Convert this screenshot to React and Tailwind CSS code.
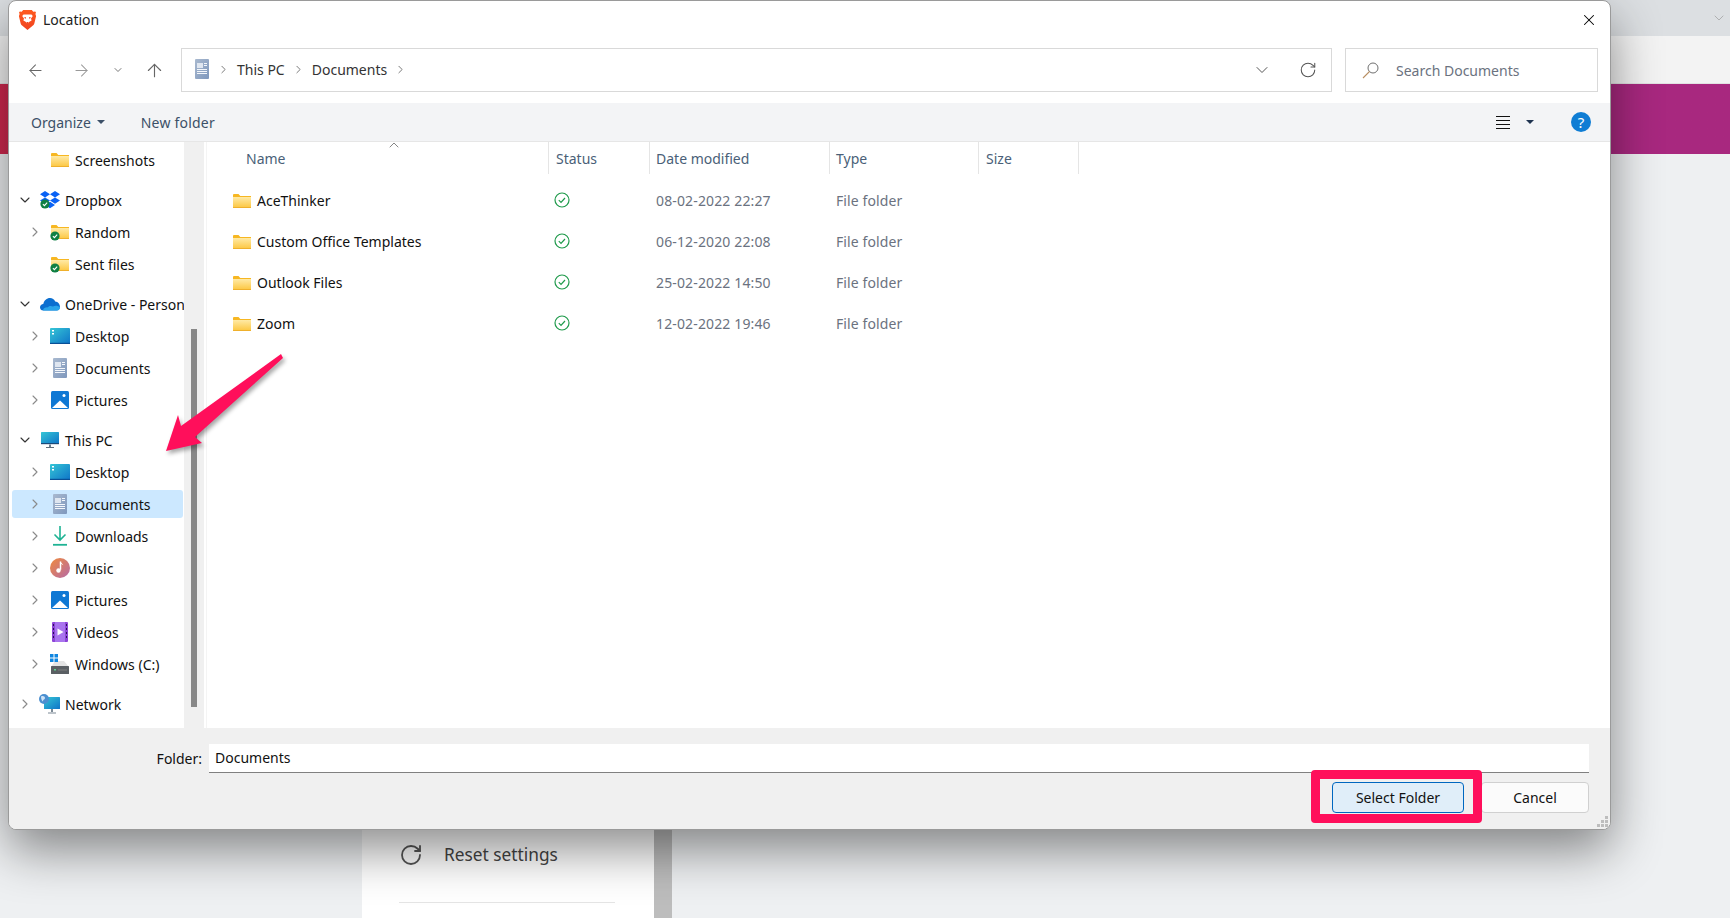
import React from "react";
import {
  ArrowLeft,
  ArrowRight,
  ArrowUp,
  ChevronDown,
  ChevronRight,
  ChevronUp,
  RotateCw,
  X,
} from "lucide-react";

// shared gradients for the little explorer icons
const Defs = () => (
  <svg className="absolute w-0 h-0">
    <defs>
      <linearGradient id="folderBody" x1="0" y1="0" x2="0" y2="1">
        <stop offset="0" stopColor="#ffeaa6" />
        <stop offset="1" stopColor="#fcc63f" />
      </linearGradient>
      <linearGradient id="docBody" x1="0" y1="0" x2="1" y2="1">
        <stop offset="0" stopColor="#a9b9cf" />
        <stop offset="1" stopColor="#7f98bd" />
      </linearGradient>
      <linearGradient id="screenBody" x1="0" y1="0" x2="1" y2="1">
        <stop offset="0" stopColor="#35c6d6" />
        <stop offset="1" stopColor="#0f74c8" />
      </linearGradient>
      <linearGradient id="musicBody" x1="0" y1="0" x2="1" y2="1">
        <stop offset="0" stopColor="#f08a3c" />
        <stop offset="1" stopColor="#b56aa8" />
      </linearGradient>
      <linearGradient id="braveBody" x1="0" y1="0" x2="0" y2="1">
        <stop offset="0" stopColor="#ff5a1f" />
        <stop offset="1" stopColor="#f0431f" />
      </linearGradient>
    </defs>
  </svg>
);

const Folder = () => (
  <svg width="18" height="14" viewBox="0 0 18 14">
    <path d="M0 1.2C0 .5.5 0 1.2 0h4.3l1.8 2H18v2H0z" fill="#f7b722" />
    <path d="M0 3h18v11H0z" fill="url(#folderBody)" />
    <path d="M0 13h18v1H0z" fill="#efb02c" />
  </svg>
);

const Badge = ({ className }) => (
  <svg className={className} width="10" height="10" viewBox="0 0 10 10">
    <circle cx="5" cy="5" r="4.6" fill="#0f8044" />
    <path d="M2.9 5.1l1.5 1.5 2.8-3" fill="none" stroke="#fff" strokeWidth="1.1" />
  </svg>
);

const SyncFolder = () => (
  <span className="relative flex">
    <Folder />
    <Badge className="absolute -left-[1px] top-[6px]" />
  </span>
);

const Dropbox = () => (
  <span className="relative flex">
    <svg width="20" height="18" viewBox="0 0 20 18">
      <path
        d="M5 0l5 3.2L5 6.4 0 3.2zM15 0l5 3.2-5 3.2-5-3.2zM5 6.4l5 3.2-5 3.2-5-3.2zM15 6.4l5 3.2-5 3.2-5-3.2zM5 14l5-3.2 5 3.2-5 3.2z"
        fill="#0a62f5"
      />
    </svg>
    <Badge className="absolute left-0 top-[8px]" />
  </span>
);

const OneDrive = () => (
  <svg width="20" height="14" viewBox="0 0 20 14">
    <path d="M3.5 13.5C.8 13.5 0 11.5 0 10.2 0 8.300 1.600 7 3.300 7 4 3.500 6.800 1 10 1c2.400 0 4.300 1.400 5.200 3.400C18 4.500 20 7 20 9.800c0 2.300-1.500 3.700-3.400 3.700z" fill="#0b6fd0" />
    <path d="M3 13.500h14c2 0 3-1.500 3-3.200-2-1.700-5-2-7-.8-2-1-4-.6-5.200.9C6.300 10 3 11 3 13.500z" fill="#2aa5ea" />
  </svg>
);

const Doc = () => (
  <svg width="14" height="20" viewBox="0 0 14 20">
    <rect width="14" height="20" rx="1" fill="url(#docBody)" />
    <path d="M2 4h6v5H2z" fill="#dfe6f0" />
    <path d="M9 4.500h3M9 6.500h3M2 10.500h10M2 12.500h10M2 14.500h10" stroke="#f4f7fb" strokeWidth="1" />
  </svg>
);

const Desktop = () => (
  <svg width="20" height="16" viewBox="0 0 20 16">
    <rect width="20" height="16" rx="1" fill="url(#screenBody)" />
    <path d="M2 2h2v1.500H2zM2 5h2v1.500H2z" fill="#fff" />
    <path d="M0 14.800h20V16H0z" fill="#0a4f96" />
  </svg>
);

const Pictures = () => (
  <svg width="18" height="18" viewBox="0 0 18 18">
    <rect width="18" height="18" rx="1.5" fill="#0f78d4" />
    <circle cx="13" cy="4.500" r="1.500" fill="#fff" />
    <path d="M1 17L9 9.500 17 17z" fill="#fff" />
  </svg>
);

const Downloads = () => (
  <svg width="14" height="20" viewBox="0 0 14 20">
    <path d="M7 0v14M1.500 8.500L7 14l5.500-5.500" fill="none" stroke="#1fb394" strokeWidth="1.600" />
    <path d="M0 18.800h14" stroke="#1fb394" strokeWidth="1.800" />
  </svg>
);

const Music = () => (
  <svg width="20" height="20" viewBox="0 0 20 20">
    <circle cx="10" cy="10" r="10" fill="url(#musicBody)" />
    <path d="M10.500 3.500v8.300" stroke="#fff" strokeWidth="1.500" />
    <path d="M10.500 3.500c.5 1.800 2.500 2 2.800 3.800-1-.9-2-1-2.800-1.200z" fill="#fff" />
    <circle cx="8.500" cy="12.500" r="2.200" fill="#fff" />
  </svg>
);

const Videos = () => (
  <svg width="16" height="20" viewBox="0 0 16 20">
    <rect width="16" height="20" rx="1" fill="#8d45d8" />
    <path d="M3 0h10v20H3z" fill="#a974ee" />
    <path d="M5.500 6.500l6 3.500-6 3.500z" fill="#fff" />
    <path d="M1 2h1v2H1zM1 6h1v2H1zM1 10h1v2H1zM1 14h1v2H1zM14 2h1v2h-1zM14 6h1v2h-1zM14 10h1v2h-1zM14 14h1v2h-1z" fill="#2c1159" />
  </svg>
);

const Drive = () => (
  <span className="relative flex w-[18px] h-[20px] items-end">
    <svg className="absolute -left-[1px] top-0" width="8" height="8" viewBox="0 0 8 8">
      <path d="M0 0h3.500v3.500H0zM4.500 0H8v3.500H4.500zM0 4.500h3.500V8H0zM4.500 4.500H8V8H4.500z" fill="#0f86e0" />
    </svg>
    <svg width="18" height="15" viewBox="0 0 18 15">
      <path d="M4 2h9l5 6H0z" fill="#e4e4e4" />
      <rect y="7" width="18" height="8" rx=".5" fill="#5a5f63" />
      <rect x="3" y="10" width="2" height="1.500" fill="#5fd38d" />
      <path d="M7 11h9" stroke="#888" strokeWidth=".8" />
    </svg>
  </span>
);

const ThisPc = () => (
  <svg width="18" height="16" viewBox="0 0 18 16">
    <rect width="18" height="12" rx=".5" fill="url(#screenBody)" />
    <path d="M0 11h18v1.200H0z" fill="#1b4a7a" />
    <path d="M8 12.500h2V15H8z" fill="#6e7f8f" />
    <path d="M5 15h8v1H5z" fill="#5f6c78" />
  </svg>
);

const Network = () => (
  <span className="relative flex w-[20px] h-[20px] items-end justify-end">
    <svg width="16" height="17" viewBox="0 0 16 17">
      <rect width="16" height="12" rx=".5" fill="url(#screenBody)" />
      <path d="M7 12h2v3H7zM4 15.500h8v1H4z" fill="#7c8a96" />
    </svg>
    <svg className="absolute -left-[1px] top-0" width="10" height="10" viewBox="0 0 10 10">
      <circle cx="5" cy="5" r="5" fill="#4b8fd0" />
      <path d="M2 2.500c2-1 4 0 4 1.500S4 5.500 4 7 2 6 2 2.500z" fill="#cfe3f5" />
    </svg>
  </span>
);

const BraveLogo = () => (
  <svg width="17" height="20" viewBox="0 0 17 20">
    <path
      d="M4.200 0h8.600l1.500 1.800 1.900-.4.800 1-.6 1.600.7 2-1.700 7.300c-.3 1.100-.8 1.800-1.800 2.500L8.500 20l-5.100-4.200c-1-.7-1.500-1.400-1.800-2.500L-.1 6l.7-2L0 2.400l.8-1 1.900.4z"
      fill="url(#braveBody)"
    />
    <path d="M4.500 4.500h8l1.300 1.500-1.800 2.500.6 2-2.600 1.400L8.500 14l-1.500-2.100L4.400 10.500l.6-2L3.200 6z" fill="#fff" />
    <path d="M7 7l-2 .6 1.500 1.400zM10 7l2 .6L10.500 9zM7.500 12h2L8.500 15z" fill="#f0431f" />
  </svg>
);

const sideGroups = [
  [{ label: "Screenshots", icon: <Folder />, level: 2, chevron: "none" }],
  [
    { label: "Dropbox", icon: <Dropbox />, level: 1, chevron: "open" },
    { label: "Random", icon: <SyncFolder />, level: 2, chevron: "closed" },
    { label: "Sent files", icon: <SyncFolder />, level: 2, chevron: "none" },
  ],
  [
    { label: "OneDrive - Person", icon: <OneDrive />, level: 1, chevron: "open" },
    { label: "Desktop", icon: <Desktop />, level: 2, chevron: "closed" },
    { label: "Documents", icon: <Doc />, level: 2, chevron: "closed" },
    { label: "Pictures", icon: <Pictures />, level: 2, chevron: "closed" },
  ],
  [
    { label: "This PC", icon: <ThisPc />, level: 1, chevron: "open" },
    { label: "Desktop", icon: <Desktop />, level: 2, chevron: "closed" },
    { label: "Documents", icon: <Doc />, level: 2, chevron: "closed", selected: true },
    { label: "Downloads", icon: <Downloads />, level: 2, chevron: "closed" },
    { label: "Music", icon: <Music />, level: 2, chevron: "closed" },
    { label: "Pictures", icon: <Pictures />, level: 2, chevron: "closed" },
    { label: "Videos", icon: <Videos />, level: 2, chevron: "closed" },
    { label: "Windows (C:)", icon: <Drive />, level: 2, chevron: "closed" },
  ],
  [{ label: "Network", icon: <Network />, level: 1, chevron: "closed" }],
];

const files = [
  { name: "AceThinker", date: "08-02-2022 22:27" },
  { name: "Custom Office Templates", date: "06-12-2020 22:08" },
  { name: "Outlook Files", date: "25-02-2022 14:50" },
  { name: "Zoom", date: "12-02-2022 19:46" },
];

const SideRow = ({ item }) => (
  <div className="h-8 py-0.5 pl-[3px] pr-[1px]">
    <div
      className={`h-full flex items-center rounded-[3px] ${item.level === 1 ? "pl-[5px]" : "pl-[15px]"} ${item.selected ? "bg-[#cce8ff]" : ""}`}
    >
      <span className="w-4 flex justify-center shrink-0">
        {item.chevron === "open" && <ChevronDown size={16} strokeWidth={1.6} className="text-[#333]" />}
        {item.chevron === "closed" && <ChevronRight size={16} strokeWidth={1.6} className="text-[#8a8a8a]" />}
      </span>
      <span className="w-5 ml-[7px] flex justify-center shrink-0">{item.icon}</span>
      <span className="ml-[5px] whitespace-nowrap text-[#111]">{item.label}</span>
    </div>
  </div>
);

const HeaderCell = ({ children, className = "" }) => (
  <div className={`h-8 flex items-center border-r border-[#e5e5e5] text-[#4a5f78] ${className}`}>{children}</div>
);

const StatusCheck = () => (
  <svg width="16" height="16" viewBox="0 0 16 16">
    <circle cx="8" cy="8" r="7" fill="none" stroke="#1f9a4b" strokeWidth="1.200" />
    <path d="M4.800 8.200l2.200 2.200 4-4.400" fill="none" stroke="#1f9a4b" strokeWidth="1.200" />
  </svg>
);

const App = () => {
  return (
    <div className="relative w-[1730px] h-[918px] overflow-hidden bg-[#eef0f2] flex flex-col font-['Noto_Sans',sans-serif] text-[14px]">
      <Defs />

      {/* page behind the dialog */}
      <div className="h-9 shrink-0 bg-[#dcdfe2] flex justify-end items-center pr-[3px]">
        <ChevronDown size={16} strokeWidth={1} className="text-[#999]" />
      </div>
      <div className="h-12 shrink-0 bg-[#f3f3f3] border-b border-[#e2e2e2]" />
      <div className="h-[70px] shrink-0 bg-gradient-to-r from-[#d0294f] via-[#a8287f] to-[#a8287f]" />
      <div className="flex-1 flex pl-[362px]">
        <div className="w-[292px] bg-white flex flex-col justify-end pl-[37px] pb-[15px]">
          <div className="flex items-center gap-[21px] h-6 mb-[35px] text-[#444] text-[17.3px]">
            <RotateCw size={24} strokeWidth={1.8} className="text-[#555]" />
            Reset settings
          </div>
          <div className="w-[216px] h-px bg-[#e5e5e5]" />
        </div>
        <div className="w-[18px] bg-[#bdbdbd]" />
      </div>

      {/* file dialog */}
      <div className="absolute left-[8px] top-0 w-[1603px] h-[830px] flex flex-col bg-white rounded-lg overflow-hidden border border-[#9a9a9a] shadow-[0_20px_50px_rgba(0,0,0,0.45)]">
        {/* title bar */}
        <div className="h-[37px] shrink-0 flex items-center pl-[10px] pr-[12px]">
          <BraveLogo />
          <span className="ml-[7px] text-[#222]">Location</span>
          <X size={18} strokeWidth={1.4} className="ml-auto text-black" />
        </div>

        {/* nav + address */}
        <div className="h-[65px] shrink-0 pt-2.5 flex pl-[3px] pr-[12px]">
          <div className="flex items-center h-11 text-[#666]">
            <span className="w-[46px] flex justify-center">
              <ArrowLeft size={19} strokeWidth={1.3} />
            </span>
            <span className="w-[46px] flex justify-center text-[#999]">
              <ArrowRight size={19} strokeWidth={1.3} />
            </span>
            <span className="w-[28px] flex justify-center text-[#555]">
              <ChevronDown size={12} strokeWidth={1.6} />
            </span>
            <span className="w-[44px] flex justify-center">
              <ArrowUp size={21} strokeWidth={1.3} />
            </span>
          </div>
          <div className="flex-1 ml-[5px] h-11 border-[1.5px] border-[#d9d9d9] flex items-center pl-[13px] pr-[14px] pb-[2px] text-[#333]">
            <Doc />
            <ChevronRight size={13} strokeWidth={1.6} className="ml-[8px] text-[#666]" />
            <span className="ml-[7px]">This PC</span>
            <ChevronRight size={13} strokeWidth={1.6} className="ml-[7px] text-[#666]" />
            <span className="ml-[7px]">Documents</span>
            <ChevronRight size={13} strokeWidth={1.6} className="ml-[7px] text-[#666]" />
            <ChevronDown size={20} strokeWidth={1.2} className="ml-auto mt-[2px] text-[#555]" />
            <RotateCw size={18} strokeWidth={1.4} className="ml-[27px] mt-[2px] text-[#555]" />
          </div>
          <div className="w-[253px] ml-[13px] h-11 border-[1.5px] border-[#d9d9d9] flex items-center pl-[16px] text-[#6b7280]">
            <svg width="17" height="17" viewBox="0 0 17 17">
              <circle cx="11" cy="6" r="5" fill="none" stroke="#6f6f6f" strokeWidth="1" />
              <path d="M7.500 9.500L1 16" stroke="#b98f63" strokeWidth="1.100" />
            </svg>
            <span className="ml-[17px]">Search Documents</span>
          </div>
        </div>

        {/* command bar */}
        <div className="h-[39px] shrink-0 bg-[#f3f4f6] border-b border-[#e6e6e6] flex items-center pl-[22px] pr-[19px] text-[#3c5068]">
          <span>Organize</span>
          <span className="ml-[6px] w-0 h-0 border-x-[4px] border-x-transparent border-t-[4px] border-t-[#3c5068]" />
          <span className="ml-[36px] tracking-[0.2px]">New folder</span>
          <svg className="ml-auto" width="14" height="14" viewBox="0 0 14 14">
            <path d="M0 1.500h14M0 5.500h14M0 9.500h14M0 13.500h14" stroke="#111" strokeWidth="1" />
          </svg>
          <span className="ml-[16px] w-0 h-0 border-x-[4px] border-x-transparent border-t-[4px] border-t-[#1f3350]" />
          <span className="ml-[37px] w-5 h-5 rounded-full bg-[#0f7dd4] text-white text-[15px] leading-5 text-center">?</span>
        </div>

        {/* body */}
        <div className="flex-1 min-h-0 flex">
          <div className="w-[175px] shrink-0 overflow-hidden pt-[2px] text-[#111]">
            {sideGroups.map((group, i) => (
              <div key={i} className={i > 0 ? "mt-2" : ""}>
                {group.map((item, j) => (
                  <SideRow key={j} item={item} />
                ))}
              </div>
            ))}
          </div>
          <div className="w-5 shrink-0 bg-[#f0f0f0] flex justify-center pt-[187px]">
            <div className="w-1.5 h-[378px] bg-[#888]" />
          </div>
          <div className="flex-1 pl-[2px]">
            <div className="h-full border-l border-[#f4f4f4]">
              <div className="relative grid grid-cols-[342px_101px_180px_149px_100px]">
                <HeaderCell className="pl-[39px]">Name</HeaderCell>
                <HeaderCell className="pl-[7px]">Status</HeaderCell>
                <HeaderCell className="pl-[6px]">Date modified</HeaderCell>
                <HeaderCell className="pl-[6px]">Type</HeaderCell>
                <HeaderCell className="pl-[7px]">Size</HeaderCell>
                <ChevronUp size={16} strokeWidth={1.2} className="absolute left-[179px] -top-[5px] text-[#666]" />
              </div>
              <div className="mt-[6px]">
                {files.map((f) => (
                  <div key={f.name} className="h-[41px] grid grid-cols-[342px_101px_180px_149px_100px] items-center">
                    <div className="flex items-center gap-[6px] pl-[26px] text-[#111]">
                      <Folder />
                      {f.name}
                    </div>
                    <div className="pl-[5px] flex -mt-[2px]">
                      <StatusCheck />
                    </div>
                    <div className="pl-[6px] text-[#6b7280] tracking-[0.14px]">{f.date}</div>
                    <div className="pl-[6px] text-[#6b7280] tracking-[0.1px]">File folder</div>
                    <div />
                  </div>
                ))}
              </div>
            </div>
          </div>
        </div>

        {/* folder name + buttons */}
        <div className="relative h-[101px] shrink-0 bg-[#f0f0f0] pt-4 pr-[21px] text-[#111]">
          <div className="flex">
            <span className="w-[193px] text-right leading-[29px]">Folder:</span>
            <div className="ml-[7px] flex-1 h-[29px] bg-white border-b-[1.5px] border-[#808080] pl-[6px] leading-[27px]">Documents</div>
          </div>
          <div className="mt-[9px] flex justify-end gap-[17px]">
            <button className="w-[132px] h-[31px] rounded-[4px] border border-[#0067c0] bg-[#e0eef9]">Select Folder</button>
            <button className="w-[108px] h-[31px] rounded-[4px] border border-[#d0d0d0] bg-[#fbfbfb]">Cancel</button>
          </div>
          <svg className="absolute right-[1px] bottom-[1px]" width="12" height="12" viewBox="0 0 12 12">
            <path d="M8 0h3v3H8zM4 4h3v3H4zM8 4h3v3H8zM0 8h3v3H0zM4 8h3v3H4zM8 8h3v3H8z" fill="#bdbdbd" />
          </svg>
        </div>
      </div>

      {/* annotation: arrow pointing at the nav pane */}
      <svg className="absolute left-0 top-0 pointer-events-none drop-shadow-[2px_3px_2px_rgba(0,0,0,0.35)]" width="300" height="470" viewBox="0 0 300 470">
        <path d="M166 451L178 415L181 426L281 354L283 358L195 437L202 443z" fill="#ff0f5b" />
      </svg>

      {/* annotation: box round the Select Folder button */}
      <div className="absolute left-[1311px] top-[770px] w-[171px] h-[53px] rounded-[4px] border-[9px] border-[#ff0f5b]" />
    </div>
  );
};

export default App;
